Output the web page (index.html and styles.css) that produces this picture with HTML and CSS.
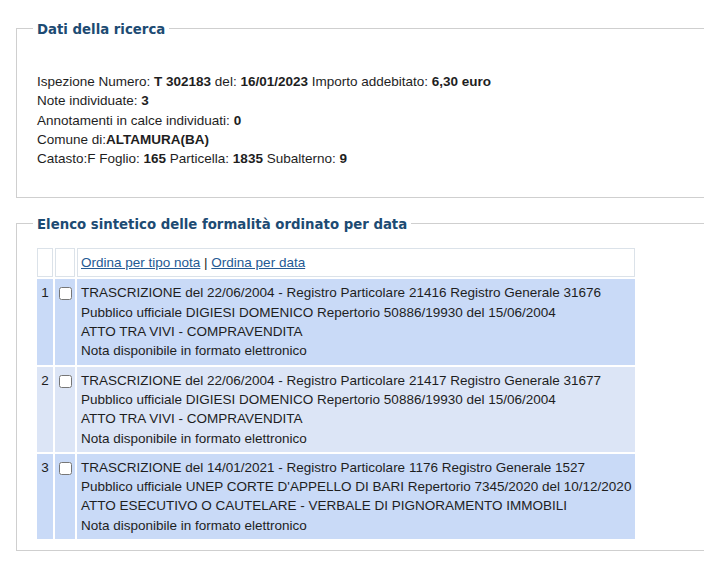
FILE: index.html
```html
<!DOCTYPE html>
<html lang="it">
<head>
<meta charset="utf-8">
<title>Ispezione</title>
<link rel="stylesheet" href="styles.css">
</head>
<body>
<div class="page">
  <fieldset class="box box-dati">
    <legend>Dati della ricerca</legend>
    <div class="dati">
      <div>Ispezione Numero: <b>T 302183</b> del: <b>16/01/2023</b> Importo addebitato: <b>6,30 euro</b></div>
      <div>Note individuate: <b>3</b></div>
      <div>Annotamenti in calce individuati: <b>0</b></div>
      <div>Comune di:<b>ALTAMURA(BA)</b></div>
      <div>Catasto:F Foglio: <b>165</b> Particella: <b>1835</b> Subalterno: <b>9</b></div>
    </div>
  </fieldset>

  <fieldset class="box box-elenco">
    <legend>Elenco sintetico delle formalità ordinato per data</legend>
    <div class="elenco">
      <table class="lista">
        <thead>
          <tr>
            <th class="c-num"></th>
            <th class="c-chk"></th>
            <th class="c-txt"><a href="#">Ordina per tipo nota</a> | <a href="#">Ordina per data</a></th>
          </tr>
        </thead>
        <tbody>
          <tr class="r-odd">
            <td class="c-num">1</td>
            <td class="c-chk"><input type="checkbox"></td>
            <td class="c-txt">TRASCRIZIONE del 22/06/2004 - Registro Particolare 21416 Registro Generale 31676<br>Pubblico ufficiale DIGIESI DOMENICO Repertorio 50886/19930 del 15/06/2004<br>ATTO TRA VIVI - COMPRAVENDITA<br>Nota disponibile in formato elettronico</td>
          </tr>
          <tr class="r-even">
            <td class="c-num">2</td>
            <td class="c-chk"><input type="checkbox"></td>
            <td class="c-txt">TRASCRIZIONE del 22/06/2004 - Registro Particolare 21417 Registro Generale 31677<br>Pubblico ufficiale DIGIESI DOMENICO Repertorio 50886/19930 del 15/06/2004<br>ATTO TRA VIVI - COMPRAVENDITA<br>Nota disponibile in formato elettronico</td>
          </tr>
          <tr class="r-odd">
            <td class="c-num">3</td>
            <td class="c-chk"><input type="checkbox"></td>
            <td class="c-txt">TRASCRIZIONE del 14/01/2021 - Registro Particolare 1176 Registro Generale 1527<br>Pubblico ufficiale UNEP CORTE D'APPELLO DI BARI Repertorio 7345/2020 del 10/12/2020<br>ATTO ESECUTIVO O CAUTELARE - VERBALE DI PIGNORAMENTO IMMOBILI<br>Nota disponibile in formato elettronico</td>
          </tr>
        </tbody>
      </table>
    </div>
  </fieldset>
</div>
</body>
</html>
```

FILE: styles.css
```css
html, body {
  margin: 0;
  padding: 0;
  background: #ffffff;
}
body {
  font-family: "Liberation Sans", Arial, sans-serif;
  font-size: 13.5px;
  line-height: 19.3px;
  color: #1e1e1e;
  overflow: hidden;
}
.page {
  padding: 18.5px 0 0 16px;
}
.box {
  margin: 0;
  padding: 0 0 0 16px;
  border: 1px solid #cfcfcf;
  border-right: none;
  min-width: 0;
}
.box legend {
  padding: 3px 4px 0;
  font-family: "DejaVu Sans", Verdana, sans-serif;
  font-weight: bold;
  font-size: 13.3px;
  line-height: 16px;
  color: #1d4b73;
}
.box-elenco {
  margin-top: 15.5px;
}
.dati {
  padding: 34.5px 0 29px 4px;
}
.dati b {
  font-weight: bold;
}
.elenco {
  padding: 13.5px 0 9px 2px;
}
.lista {
  border-collapse: separate;
  border-spacing: 2px;
}
.lista th,
.lista td {
  vertical-align: top;
  text-align: left;
  font-weight: normal;
  white-space: nowrap;
}
.lista th {
  border: 1px solid #dbe2e9;
  padding: 4px 3px;
  line-height: 19px;
  background: #ffffff;
}
.lista td {
  padding: 3px 3px;
}
.lista .c-num {
  width: 14px;
  padding-left: 0;
  padding-right: 0;
  text-align: center;
}
.lista .c-chk {
  width: 18px;
  padding-left: 0;
  padding-right: 0;
}
.lista .c-txt {
  padding-left: 3px;
  padding-right: 3px;
}
.lista input {
  display: block;
  margin: 4px auto 0;
  width: 13px;
  height: 13px;
}
.r-odd td {
  background: #c9daf7;
  border: 1px solid #c9daf7;
}
.r-even td {
  background: #dce5f6;
  border: 1px solid #dce5f6;
}
.lista a {
  color: #245a94;
  text-decoration: underline;
}
```
